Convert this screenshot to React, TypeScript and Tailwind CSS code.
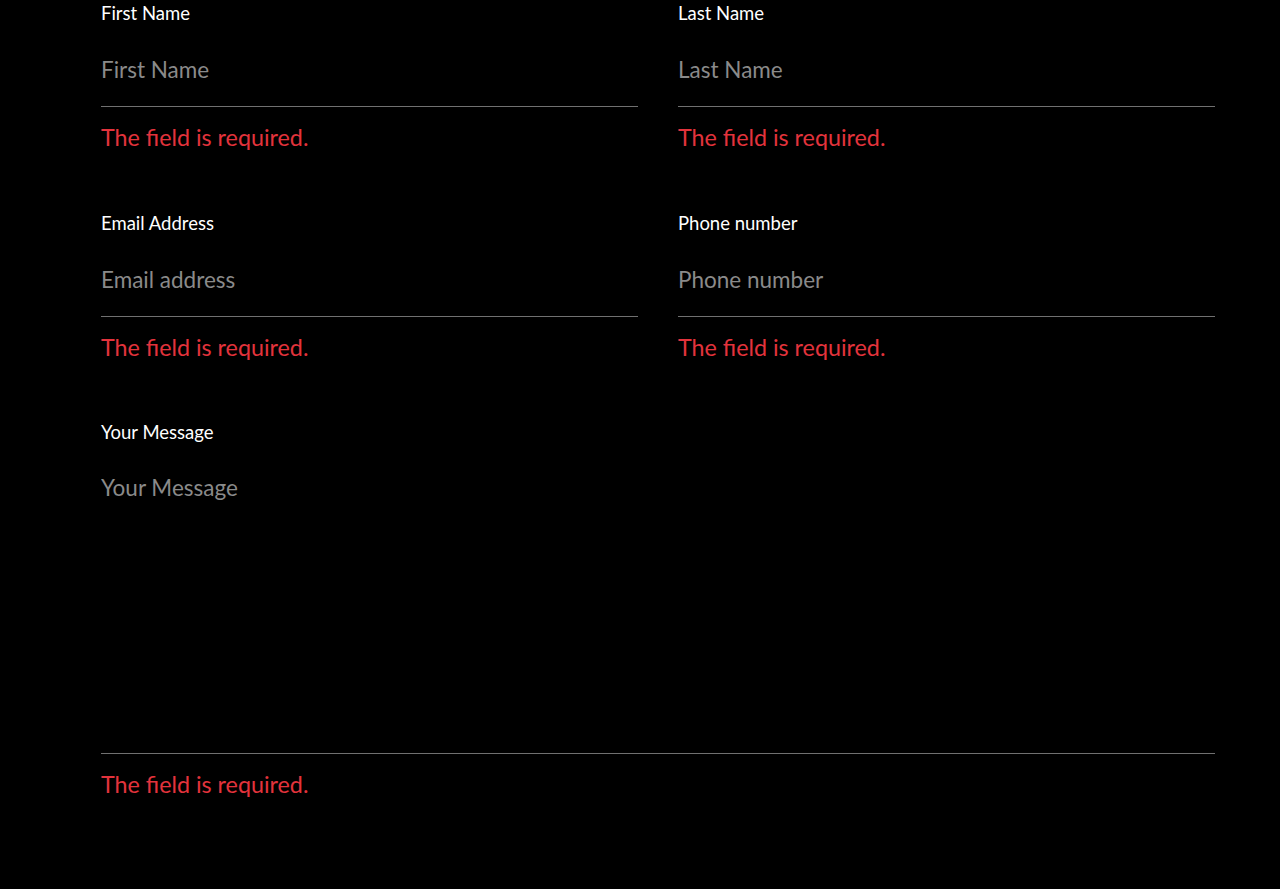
import React from "react"

const font = { fontFamily: "Lato, 'Open Sans', sans-serif" }

function Field({ label, placeholder }: { label: string; placeholder: string }) {
  return (
    <div className="flex flex-col">
      <label className="text-[18.5px] leading-[26px] text-white">{label}</label>
      <input
        placeholder={placeholder}
        className="h-[81px] w-full border-b border-[#707070] bg-transparent pt-[28px] pb-[22px] text-[22.5px] leading-[30px] text-white outline-none placeholder:text-[#8a8a8a]"
      />
      <p className="mt-[15px] text-[23.3px] leading-[30px] text-[#e3333c]">The field is required.</p>
    </div>
  )
}

export default function App() {
  return (
    <div className="min-h-screen bg-black" style={font}>
      <form className="ml-[101px] w-[1114px]">
        <div className="grid grid-cols-2 gap-x-[40px] gap-y-[58px]">
          <Field label="First Name" placeholder="First Name" />
          <Field label="Last Name" placeholder="Last Name" />
          <Field label="Email Address" placeholder="Email address" />
          <Field label="Phone number" placeholder="Phone number" />
        </div>
        <div className="mt-[57px] flex flex-col">
          <label className="text-[18.5px] leading-[26px] text-white">Your Message</label>
          <textarea
            placeholder="Your Message"
            className="h-[309px] w-full resize-none border-b border-[#707070] bg-transparent pt-[28px] text-[22.5px] leading-[30px] text-white outline-none placeholder:text-[#8a8a8a]"
          />
          <p className="mt-[15px] text-[23.3px] leading-[30px] text-[#e3333c]">The field is required.</p>
        </div>
      </form>
    </div>
  )
}
